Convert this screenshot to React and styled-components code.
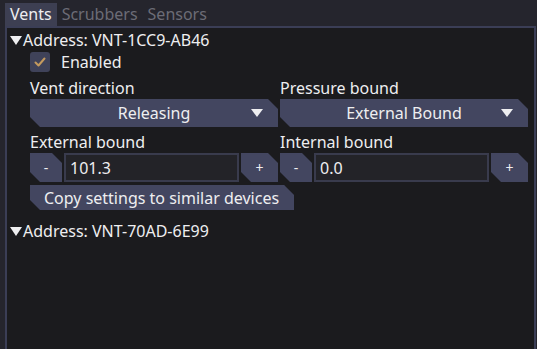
import React from "react";
import styled, { createGlobalStyle } from "styled-components";

const GlobalStyle = createGlobalStyle`
  html, body {
    margin: 0;
    padding: 0;
    background: #25252d;
    height: 100%;
  }
  #root { height: 100%; }
`;

const Page = styled.div`
  height: 349px;
  box-sizing: border-box;
  padding: 3px 0 0 5px;
  display: flex;
  flex-direction: column;
  font-family: "Noto Sans", sans-serif;
  font-size: 16px;
  color: #eeeef0;
  overflow: hidden;
`;

const TabBar = styled.div`
  display: flex;
  height: 23px;
`;

const Tab = styled.div`
  padding: 0 5px;
  line-height: 23px;
  background: ${(p) => (p.active ? "#3d3f52" : "transparent")};
  color: ${(p) => (p.active ? "#eeeef0" : "#6c6c76")};
`;

const Panel = styled.div`
  flex: 1;
  background: #1b1b1e;
  border: 2px solid #3b3e56;
  border-bottom: none;
  margin-right: 1px;
  padding: 2px 3px 0 3px;
`;

const Header = styled.div`
  display: flex;
  align-items: center;
  height: 20px;
  line-height: 20px;
  margin-top: ${(p) => p.top || 0}px;
`;

const Arrow = styled.span`
  width: 0;
  height: 0;
  border-left: 6px solid transparent;
  border-right: 6px solid transparent;
  border-top: 9px solid #eeeef0;
  margin-right: 1px;
`;

const Body = styled.div`
  padding-left: 20px;
  padding-right: 3px;
`;

const CheckRow = styled.div`
  display: flex;
  align-items: center;
  gap: 11px;
  height: 21px;
  margin-top: 1px;
`;

const Box = styled.div`
  width: 20px;
  height: 20px;
  border-radius: 3px;
  background: #3f4259;
  display: flex;
  align-items: center;
  justify-content: center;
`;

const Grid = styled.div`
  display: grid;
  grid-template-columns: 1fr 1fr;
  column-gap: 2px;
  margin-top: 5px;
`;

const Field = styled.div`
  display: flex;
  flex-direction: column;
`;

const Label = styled.div`
  height: 22px;
  line-height: 22px;
`;

const cut = `clip-path: polygon(0 0, calc(100% - 10px) 0, 100% 10px, 100% 100%, 10px 100%, 0 calc(100% - 10px));`;

const Dropdown = styled.div`
  position: relative;
  height: 28px;
  background: #434660;
  ${cut}
  display: flex;
  align-items: center;
  justify-content: center;
  margin-bottom: 4px;
`;

const Caret = styled.span`
  position: absolute;
  right: 15px;
  top: 10px;
  width: 0;
  height: 0;
  border-left: 6px solid transparent;
  border-right: 6px solid transparent;
  border-top: 8px solid #eeeef0;
`;

const SpinRow = styled.div`
  display: flex;
  gap: 2px;
  height: 29px;
`;

const StepButton = styled.div`
  width: ${(p) => p.w}px;
  flex: none;
  background: #434660;
  ${cut}
  display: flex;
  align-items: center;
  justify-content: center;
  font-size: 14px;
`;

const Input = styled.div`
  flex: 1;
  box-sizing: border-box;
  border: 2px solid #393b4d;
  background: #232328;
  padding-left: 4px;
  display: flex;
  align-items: center;
`;

const WideButton = styled.div`
  display: inline-flex;
  align-items: center;
  height: 25px;
  margin-top: 3px;
  padding: 0 15px 0 14px;
  background: #434660;
  ${cut}
`;

function Spin({ value }) {
  return (
    <SpinRow>
      <StepButton w={32}>-</StepButton>
      <Input>{value}</Input>
      <StepButton w={37}>+</StepButton>
    </SpinRow>
  );
}

export default function App() {
  return (
    <>
      <GlobalStyle />
      <Page>
        <TabBar>
          <Tab active>Vents</Tab>
          <Tab>Scrubbers</Tab>
          <Tab>Sensors</Tab>
        </TabBar>
        <Panel>
          <Header>
            <Arrow />
            Address: VNT-1CC9-AB46
          </Header>
          <Body>
            <CheckRow>
              <Box>
                <svg width="12" height="10" viewBox="0 0 12 10">
                  <path d="M1.5 5.5 L4.5 8.5 L10.5 1.5" fill="none" stroke="#c49a5e" strokeWidth="2" strokeLinecap="round" strokeLinejoin="round" />
                </svg>
              </Box>
              Enabled
            </CheckRow>
            <Grid>
              <Field>
                <Label>Vent direction</Label>
                <Dropdown>
                  Releasing
                  <Caret />
                </Dropdown>
                <Label>External bound</Label>
                <Spin value="101.3" />
              </Field>
              <Field>
                <Label>Pressure bound</Label>
                <Dropdown>
                  External Bound
                  <Caret />
                </Dropdown>
                <Label>Internal bound</Label>
                <Spin value="0.0" />
              </Field>
            </Grid>
            <WideButton>Copy settings to similar devices</WideButton>
          </Body>
          <Header top={11}>
            <Arrow />
            Address: VNT-70AD-6E99
          </Header>
        </Panel>
      </Page>
    </>
  );
}
